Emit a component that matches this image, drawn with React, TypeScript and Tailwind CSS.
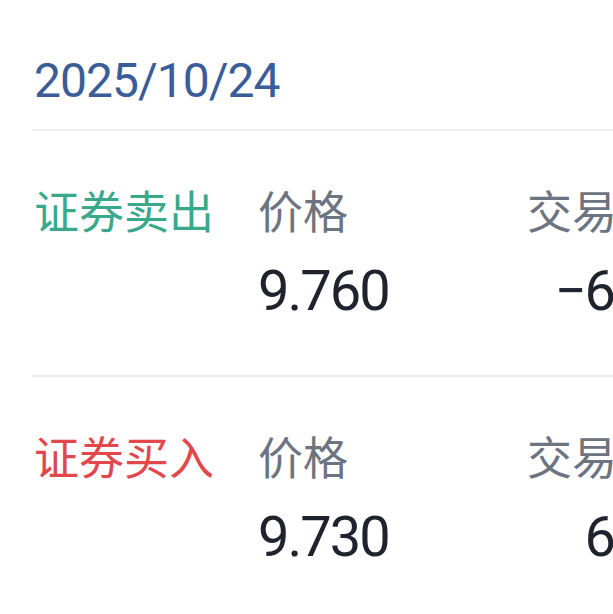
import React from 'react';

interface Trade {
  type: string;
  color: string;
  price: string;
  volume: string;
}

const trades: Trade[] = [
  { type: '证券卖出', color: 'text-[#3aa98b]', price: '9.760', volume: '−600' },
  { type: '证券买入', color: 'text-[#e2474c]', price: '9.730', volume: '600' },
];

const cjk = "font-['Noto_Sans_CJK_SC',sans-serif]";
const num = "font-['Roboto','Noto_Sans_CJK_SC',sans-serif]";

export default function App() {
  return (
    <div className="w-[613px] h-[614px] overflow-hidden bg-white">
      <div className="pl-[32px] w-[800px]">
        {/* 日期 */}
        <div className={`pt-[57px] pl-[2px] text-[48px] leading-none tracking-[-1px] text-[#3a5d98] ${num}`}>
          2025/10/24
        </div>
        <div className="mt-[24px] h-[2px] w-[700px] bg-[#ececec]" />

        {trades.map((t) => (
          <div key={t.type}>
            <div className="flex pt-[56px] pb-[56px]">
              <div className={`w-[226px] shrink-0 whitespace-nowrap pl-[2px] text-[45px] leading-none ${cjk} ${t.color}`}>
                {t.type}
              </div>
              <div className="w-[269px] shrink-0">
                <div className={`text-[45px] leading-none text-[#6c7381] whitespace-nowrap ${cjk}`}>价格</div>
                <div className={`mt-[31px] text-[56px] leading-none tracking-[-2px] text-[#1e232d] ${num}`}>
                  {t.price}
                </div>
              </div>
              <div className="w-[200px] shrink-0">
                <div className={`text-[45px] leading-none text-[#6c7381] whitespace-nowrap ${cjk}`}>交易数量</div>
                <div className={`mt-[31px] w-[146px] text-right text-[56px] leading-none tracking-[-2px] text-[#1e232d] ${num}`}>
                  {t.volume}
                </div>
              </div>
            </div>
            <div className="h-[2px] w-[700px] bg-[#ececec]" />
          </div>
        ))}
      </div>
    </div>
  );
}
